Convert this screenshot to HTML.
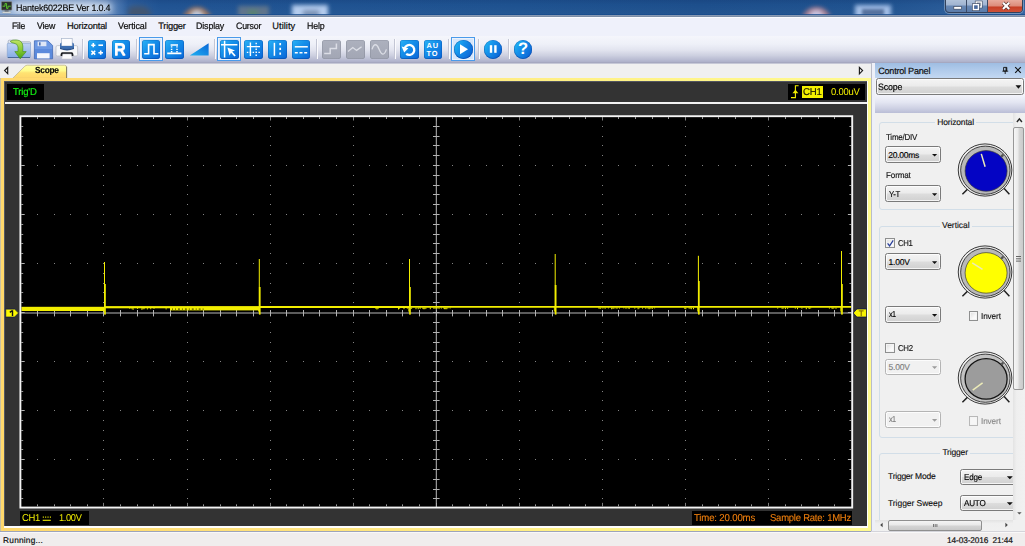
<!DOCTYPE html>
<html><head><meta charset="utf-8"><title>Hantek6022BE</title>
<style>
html,body{margin:0;padding:0;}
body{width:1025px;height:546px;overflow:hidden;position:relative;background:#f0f0f0;font-family:"Liberation Sans",sans-serif;font-size:9px;color:#000;text-rendering:geometricPrecision;}
.abs{position:absolute;}
.t{position:absolute;white-space:nowrap;line-height:1;}
#title{left:0;top:0;width:1025px;height:18px;overflow:hidden;background:#1e4f8c;}
#menu{left:0;top:18px;width:1025px;height:18px;background:#eff1fb;}
#menu .t{top:3.5px;font-size:9.3px;color:#111;-webkit-text-stroke:0.22px #111;}
#tool{left:0;top:36px;width:1025px;height:27px;background:linear-gradient(#f5f6fc 0%,#eef0f8 30%,#e2e4ef 52%,#cdd0e0 72%,#b6b9d0 90%,#a8abc5 100%);}
.ico{position:absolute;top:4px;width:18.5px;height:18.5px;border-radius:3px;background:linear-gradient(135deg,#2bb4f6 0%,#1590ea 40%,#0a66d8 100%);box-shadow:inset 0 0 0 0.6px rgba(10,80,170,.5),inset 0 -1px 1px rgba(0,50,150,.35);}
.ico.g{background:linear-gradient(#adb1be,#a2a6b4);box-shadow:inset 0 0 0 0.6px rgba(120,125,140,.5);}
.hl{position:absolute;top:1.4px;height:24px;border:1px solid #4a9aea;background:#d6e6fa;box-sizing:border-box;box-shadow:inset 0 0 0 1px rgba(255,255,255,.5);}
.sep{position:absolute;top:3px;width:1px;height:20px;background:#c3c6d4;box-shadow:1px 0 0 #fbfbfe;}
.circ{position:absolute;top:4px;width:18.5px;height:18.5px;border-radius:50%;background:linear-gradient(120deg,#22c0f6 0%,#1590ea 40%,#0a5cd2 100%);box-shadow:inset 0 0 0 0.6px rgba(10,70,160,.5),inset 0 -1px 1px rgba(0,50,150,.35);}
/* scope */
#tabrow{left:0;top:63px;width:871px;height:15px;background:#f0f0f0;border-top:1px solid #c6c8d6;box-sizing:border-box;}
/* panel */
.combo{position:absolute;box-sizing:border-box;border:1px solid #7a7a7a;border-radius:2.5px;background:linear-gradient(#f4f4f4 0%,#ebebeb 48%,#dddddd 52%,#d0d0d0 100%);box-shadow:inset 0 0 0 1px rgba(255,255,255,.75);}
.combo .t{left:4px;top:3.6px;font-size:9px;}
#pc .t{-webkit-text-stroke:0.14px currentColor;}
.combo.dis{border-color:#b4b4b4;background:#f1f1f1;}
.combo.dis .t{color:#7e7e7e;-webkit-text-stroke:0;}
.arr{position:absolute;right:4px;top:6.5px;width:0;height:0;border-left:2.7px solid transparent;border-right:2.7px solid transparent;border-top:3px solid #111;}
.combo.dis .arr{border-top-color:#9a9a9a;}
.grp{position:absolute;box-sizing:border-box;border:1px solid #d2dee8;border-radius:3px;}
.glab{position:absolute;background:#f0f0f0;padding:0 2px;font-size:9px;line-height:1;white-space:nowrap;color:#111;}
.cb{position:absolute;width:9.5px;height:9.5px;box-sizing:border-box;border:1px solid #8e8f8f;background:linear-gradient(135deg,#dcdcdc,#f8f8f8 60%,#fff);box-shadow:inset 0 0 0 1px #f4f4f4;}

#c100v{margin-top:1px}
#c2000{margin-top:1px}
#c500v{margin-top:1px}
#ch1a{margin-top:1px}
#ch1b{margin-top:1px}
#cptxt{margin-top:1px}
#cyt{margin-top:1px}
#date{margin-top:1px}
#lch1{margin-top:1px}
#lch2{margin-top:1px}
#lfmt{margin-top:1px}
#lh{margin-top:1px}
#ltd{margin-top:1px}
#ltm{margin-top:1px}
#lts{margin-top:1px}
#lv{margin-top:1px}
#run{margin-top:1px}
#srate{margin-top:1px}
#tabtxt{margin-top:-1px}
#time{margin-top:1px}
#trigd{margin-top:1px}
#uv{margin-top:1px}
#v100{margin-top:1px}
</style></head>
<body>
<div id="title" class="abs">
  <!-- aero glass backdrop -->
  <div class="abs" style="left:0;top:0;width:1025px;height:17px;background:linear-gradient(90deg,#8eabd2 0px,#93b0d6 40px,#86a5cf 90px,#5a83b8 112px,#2d5f9e 128px,#205392 160px,#1e5290 520px,#1d4f8c 700px,#1f528f 880px,#3263a0 1025px);"></div>
  <div class="abs" style="left:0;top:0;width:1025px;height:17px;background:linear-gradient(180deg,rgba(0,10,60,.10) 0,rgba(255,255,255,0) 5px,rgba(255,255,255,.04) 17px);"></div>
  <!-- blurred blobs -->
  <div class="abs" style="left:128px;top:6px;width:23px;height:14px;border-radius:5px 9px 0 0;background:#46556a;filter:blur(2.4px);opacity:.85"></div>
  <div class="abs" style="left:182px;top:6.5px;width:30px;height:18px;border-radius:15px 15px 0 0;background:#b27c58;filter:blur(2.2px);opacity:.85"></div><div class="abs" style="left:190px;top:10px;width:14px;height:10px;border-radius:7px 7px 0 0;background:#c4d4ea;filter:blur(2px);opacity:.9"></div>
  <div class="abs" style="left:238px;top:6px;width:31px;height:13px;background:#67798c;filter:blur(2.2px);opacity:.9"></div><div class="abs" style="left:248px;top:10px;width:10px;height:7px;background:#568a68;filter:blur(2px);opacity:.7"></div>
  <div class="abs" style="left:292px;top:5px;width:36px;height:14px;background:#bcd3f3;filter:blur(2px);opacity:.95"></div>
  <div class="abs" style="left:303px;top:10px;width:16px;height:8px;background:#6f86a8;filter:blur(2px);opacity:.8"></div>
  <div class="abs" style="left:802px;top:7px;width:29px;height:18px;border-radius:14px 14px 0 0;background:#b98490;filter:blur(2.2px);opacity:.85"></div><div class="abs" style="left:809px;top:10px;width:15px;height:10px;border-radius:7px 7px 0 0;background:#cfd0ee;filter:blur(2px);opacity:.85"></div>
  <div class="abs" style="left:855px;top:5px;width:36px;height:14px;background:#a9c4ec;filter:blur(2px);opacity:.95"></div>
  <div class="abs" style="left:862px;top:9px;width:22px;height:7px;background:#44608c;filter:blur(1.5px);opacity:.8"></div>
  <!-- glow behind title -->
  <div class="abs" style="left:12px;top:3px;width:100px;height:10px;border-radius:6px;background:#e9eff8;filter:blur(3.5px);opacity:.8"></div>
  <!-- app icon -->
  <svg class="abs" style="left:1px;top:1px" width="12" height="13" viewBox="0 0 12 13">
    <rect x="0.3" y="0.6" width="10.6" height="8.6" rx="0.8" fill="#2b2f2d" stroke="#9aa09c" stroke-width="0.6"/>
    <path d="M1.5 5.2 H4 V2.6 H5.6 V7.4 H7 V5.2 H9.8" fill="none" stroke="#58c42c" stroke-width="1"/>
    <rect x="3.6" y="9.6" width="4" height="1.1" fill="#444"/>
    <rect x="1.4" y="10.7" width="8.4" height="1.3" rx="0.5" fill="#e9ecec" stroke="#8d9290" stroke-width="0.4"/>
  </svg>
  <div class="t" id="ttext" style="left:16px;top:3.2px;font-size:9.4px;color:#050505;-webkit-text-stroke:0.15px #050505;letter-spacing:-0.189px;transform:scaleX(0.9531);transform-origin:0 0;">Hantek6022BE Ver 1.0.4</div>
  <!-- bottom edge -->
  <div class="abs" style="left:0;top:14px;width:1025px;height:1px;background:linear-gradient(90deg,rgba(60,100,160,.35) 0,rgba(40,85,150,.5) 110px,rgba(23,75,140,.8) 135px)"></div><div class="abs" style="left:0;top:15px;width:1025px;height:2px;background:linear-gradient(#8fa0bb,#76879f)"></div>
  <div class="abs" style="left:0;top:17px;width:1025px;height:1px;background:#fcfcff"></div>
  <!-- window controls -->
  <div class="abs" style="left:945px;top:-2px;width:78px;height:15.4px;border:1px solid #33425c;border-radius:0 0 4px 4px;box-sizing:border-box;overflow:hidden;background:linear-gradient(#b4c5dc 0,#9fb3d0 49%,#6888b4 51%,#5b7caa 100%);box-shadow:0 0 0 0.8px rgba(255,255,255,.4);">
    <div class="abs" style="left:41px;top:0;width:36px;height:15px;background:linear-gradient(#eab0a2 0,#dc8a78 49%,#c63d24 51%,#d25a40 100%);"></div>
    <div class="abs" style="left:20px;top:0;width:1px;height:15px;background:#3c4b66"></div>
    <div class="abs" style="left:40.5px;top:0;width:1px;height:15px;background:#3c4b66"></div>
    <svg class="abs" style="left:0;top:0" width="78" height="15" viewBox="945 -1 78 15">
      <!-- minimise -->
      <rect x="952.8" y="6.4" width="7.8" height="2.8" fill="#fff" stroke="#3a465e" stroke-width="0.7"/>
      <!-- restore -->
      <rect x="975.2" y="2" width="5" height="5" fill="none" stroke="#3a465e" stroke-width="2.6"/>
      <rect x="975.2" y="2" width="5" height="5" fill="none" stroke="#fff" stroke-width="1.4"/>
      <rect x="972.4" y="4.6" width="5" height="5" fill="#5a7aa8" stroke="#3a465e" stroke-width="2.6"/>
      <rect x="972.4" y="4.6" width="5" height="5" fill="#4a6a9c" stroke="#fff" stroke-width="1.4"/>
      <!-- close -->
      <path d="M1002 2.8L1008.2 9M1008.2 2.8L1002 9" stroke="#55302c" stroke-width="3.4" fill="none"/>
      <path d="M1002 2.8L1008.2 9M1008.2 2.8L1002 9" stroke="#fff" stroke-width="2.1" fill="none"/>
    </svg>
  </div>
</div>

<div id="menu" class="abs">
  <div class="t" id="m0" style="left:12px;letter-spacing:-0.241px;transform:scaleX(0.9272);transform-origin:0 0">File</div>
  <div class="t" id="m1" style="left:37px;letter-spacing:-0.236px;transform:scaleX(0.9454);transform-origin:0 0">View</div>
  <div class="t" id="m2" style="left:67px;letter-spacing:-0.186px">Horizontal</div>
  <div class="t" id="m3" style="left:118.4px;letter-spacing:-0.111px;transform:scaleX(0.9657);transform-origin:0 0">Vertical</div>
  <div class="t" id="m4" style="left:158.2px;letter-spacing:-0.230px">Trigger</div>
  <div class="t" id="m5" style="left:196.4px;letter-spacing:-0.160px;transform:scaleX(0.9570);transform-origin:0 0">Display</div>
  <div class="t" id="m6" style="left:235.8px;letter-spacing:-0.214px;transform:scaleX(0.9467);transform-origin:0 0">Cursor</div>
  <div class="t" id="m7" style="left:272.3px;letter-spacing:0.024px">Utility</div>
  <div class="t" id="m8" style="left:306.5px;letter-spacing:-0.192px;transform:scaleX(0.9533);transform-origin:0 0">Help</div>
</div>

<div id="tool" class="abs">
  <div class="abs" style="left:0;top:26px;width:1025px;height:1px;background:#a6a8c0"></div>
  <!-- open -->
  <svg class="abs" style="left:5px;top:2px" width="28" height="24" viewBox="5 38 28 24">
    <defs><linearGradient id="fo" x1="0" y1="0" x2="0" y2="1"><stop offset="0" stop-color="#c0d3f3"/><stop offset="1" stop-color="#84abe6"/></linearGradient>
    <linearGradient id="ga" x1="0" y1="0" x2="0" y2="1"><stop offset="0" stop-color="#c0e468"/><stop offset=".5" stop-color="#8ccc34"/><stop offset="1" stop-color="#44a214"/></linearGradient></defs>
    <path d="M8.2 44.4V41.2Q8.2 40.2 9.2 40.2H16.4L18 41.8H29.6Q30.6 41.8 30.6 42.8V44.4Z" fill="#e4e9f3" stroke="#9aa3b2" stroke-width="0.7"/>
    <rect x="7.3" y="43.3" width="23.2" height="14.3" rx="1" fill="url(#fo)" stroke="#8aa6d2" stroke-width="0.7"/>
    <path d="M7.8 57.5H30" stroke="#3f5f92" stroke-width="0.9"/>
    <path d="M10.2 41.4Q12 39.6 17 40Q22.4 40.6 22.8 46L22.8 51.6L26.2 51.6L20.2 58.8L14.8 51.6L18 51.6L18 47Q17.6 43.6 14 43.2Q11.6 43 10.2 41.4Z" fill="url(#ga)" stroke="#3f8a14" stroke-width="0.6"/>
  </svg>
  <!-- save -->
  <svg class="abs" style="left:33px;top:2.6px" width="21" height="21" viewBox="0 0 21 21">
    <path d="M1.4 1.8 H14.8 L19.6 6.4 V19.8 H1.4 Z" fill="#5b8adc" stroke="#4168b4" stroke-width="0.8"/>
    <path d="M1.8 2.2 H14.6 L19.2 6.6 V10 H1.8Z" fill="#79a3ea" opacity=".6"/>
    <rect x="4.6" y="2.6" width="8.8" height="4.6" fill="#dfe7f6"/>
    <rect x="6" y="3.3" width="1.6" height="3.2" fill="#5073b5"/>
    <rect x="4" y="14.2" width="12.6" height="5.2" fill="#f4f7fd"/>
  </svg>
  <!-- print -->
  <svg class="abs" style="left:55px;top:0.6px" width="24" height="24" viewBox="0 0 24 24">
    <rect x="1" y="8.6" width="21.6" height="10.4" rx="1.4" fill="#f7f8fa" stroke="#b6b9c0" stroke-width="0.7"/>
    <rect x="6.6" y="1.6" width="10.6" height="7.4" fill="#fdfdfe" stroke="#a9b6cc" stroke-width="0.7"/>
    <path d="M5 7.6 Q5 6 6.4 5.6 V9 H17.4 V5.6 Q19 6 19 7.6 V11 Q12 13.6 5 11 Z" fill="#3f6fb0"/>
    <path d="M5 10.6 Q12 13.6 19 10.6 V12 Q12 14.8 5 12 Z" fill="#2c528c"/>
    <path d="M5.6 17.4 Q5.6 15.2 7.4 15.2 H16.6 Q18.4 15.2 18.4 17.4 V19 H5.6Z" fill="#1b1d22"/>
    <path d="M6.6 22 L7.8 17 H16.2 L17.4 22 Z" fill="#fbfbfd" stroke="#b7bac2" stroke-width="0.5"/>
  </svg>
  <div class="sep" style="left:82px"></div>
  <!-- calc -->
  <div class="ico" style="left:87.8px"><svg width="18.5" height="18.5" viewBox="0 0 18.5 18.5"><g stroke="#fff" stroke-width="1.6" fill="none"><path d="M3.2 5.2H7.4M5.3 3.1V7.3"/><path d="M10.4 5.2H15"/><path d="M3.4 10.8L7.2 14.6M7.2 10.8L3.4 14.6"/><path d="M10.4 12.7H15M12.7 10.6V14.8"/></g></svg></div>
  <!-- R -->
  <div class="ico" style="left:111.7px"><div class="t" style="left:2.3px;top:0.8px;font-size:17.4px;font-weight:bold;color:#fff;text-shadow:0 .5px 0 #dde;transform:scaleX(.95);transform-origin:0 0">R</div></div>
  <div class="sep" style="left:136.4px"></div>
  <!-- pulse (selected) -->
  <div class="hl" style="left:139px;width:23.8px"></div>
  <div class="ico" style="left:141.7px"><svg width="18.5" height="18.5" viewBox="0 0 18.5 18.5"><path d="M2.2 13.8H6.6V4.6H12V13.8H16.4" stroke="#fff" stroke-width="1.6" fill="none"/></svg></div>
  <!-- pulse2 -->
  <div class="ico" style="left:165.4px"><svg width="18.5" height="18.5" viewBox="0 0 18.5 18.5"><path d="M2.2 13.4H16.4M5.6 5H13" stroke="#fff" stroke-width="1.6" fill="none"/><path d="M6.6 12.4V5.6M12 12.4V5.6" stroke="#fff" stroke-width="1.5" stroke-dasharray="1.3 1.1" fill="none"/></svg></div>
  <!-- triangle -->
  <svg class="abs" style="left:189px;top:3.2px" width="21" height="19" viewBox="0 0 21 19"><defs><linearGradient id="tg" x1="0" y1="1" x2="1" y2="0"><stop offset="0" stop-color="#1fb0f2"/><stop offset="1" stop-color="#0a66d6"/></linearGradient></defs><path d="M0.8 16.6 L19.6 4.2 V16.6 Z" fill="url(#tg)"/></svg>
  <div class="sep" style="left:214.4px"></div>
  <!-- cursor (selected) -->
  <div class="hl" style="left:217px;width:24px"></div>
  <div class="ico" style="left:220px"><svg width="18.5" height="18.5" viewBox="0 0 18.5 18.5"><path d="M4.6 0.8V17.6M1 4.8H17.4" stroke="#fff" stroke-width="1.5" fill="none"/><path d="M7.4 7.4 L15 10.6 L12.2 11.6 L15.8 15.4 L14.4 16.6 L11 12.8 L9.6 15.4 Z" fill="#fff"/></svg></div>
  <!-- hash -->
  <div class="ico" style="left:244.1px"><svg width="18.5" height="18.5" viewBox="0 0 18.5 18.5"><path d="M6.4 2.6V16M2.8 6.6H16" stroke="#fff" stroke-width="1.4" fill="none"/><path d="M12.2 2.8V16M2.8 12.4H16" stroke="#fff" stroke-width="1.4" stroke-dasharray="1.5 1.4" fill="none"/></svg></div>
  <!-- vbars -->
  <div class="ico" style="left:268px"><svg width="18.5" height="18.5" viewBox="0 0 18.5 18.5"><path d="M6.4 2.8V15.8" stroke="#fff" stroke-width="1.5" fill="none"/><path d="M12.2 3V16" stroke="#fff" stroke-width="1.7" stroke-dasharray="2.2 2.6" fill="none"/></svg></div>
  <!-- hbars -->
  <div class="ico" style="left:291.9px"><svg width="18.5" height="18.5" viewBox="0 0 18.5 18.5"><path d="M2.8 6.8H15.8" stroke="#fff" stroke-width="1.5" fill="none"/><path d="M2.8 12.8H16.4" stroke="#fff" stroke-width="1.6" stroke-dasharray="3 1.7" fill="none"/></svg></div>
  <div class="sep" style="left:316.4px"></div>
  <!-- grey icons -->
  <div class="ico g" style="left:322px"><svg width="18.5" height="18.5" viewBox="0 0 18.5 18.5"><path d="M2.2 13.6H8.2V8.6H14.4V3.6" stroke="#dcdee6" stroke-width="1.5" fill="none"/></svg></div>
  <div class="ico g" style="left:346px"><svg width="18.5" height="18.5" viewBox="0 0 18.5 18.5"><path d="M2 11.6L6.8 7.6L10.6 10.4L15.6 6.8" stroke="#dcdee6" stroke-width="1.3" fill="none"/></svg></div>
  <div class="ico g" style="left:370px"><svg width="18.5" height="18.5" viewBox="0 0 18.5 18.5"><path d="M2 9.4C4 3.2 6.6 3.2 9.2 9.4S14.4 15.6 16.4 9.4" stroke="#dcdee6" stroke-width="1.3" fill="none"/></svg></div>
  <div class="sep" style="left:394.2px"></div>
  <!-- refresh -->
  <div class="ico" style="left:400px"><svg width="18.5" height="18.5" viewBox="0 0 18.5 18.5"><path d="M6.2 13.9A5 5 0 1 0 4.6 8.2" stroke="#fff" stroke-width="2.3" fill="none"/><path d="M1.6 6.6L8.4 8.2L4.2 12.6Z" fill="#fff"/></svg></div>
  <!-- AUTO -->
  <div class="ico" style="left:423.7px"><div class="t" style="left:2.7px;top:2.2px;font-size:7.4px;font-weight:bold;color:#fff;letter-spacing:1.1px;line-height:7.4px;white-space:pre">AU
TO</div></div>
  <div class="sep" style="left:448px"></div>
  <!-- play (selected) -->
  <div class="hl" style="left:451px;width:24px"></div>
  <div class="circ" style="left:454px"><svg width="18.5" height="18.5" viewBox="0 0 18.5 18.5"><path d="M6 4.2L14 9.2L6 14.2Z" fill="#fff"/></svg></div>
  <div class="sep" style="left:478.2px"></div>
  <div class="circ" style="left:483.8px"><svg width="18.5" height="18.5" viewBox="0 0 18.5 18.5"><rect x="5.8" y="5.2" width="2.4" height="7.6" fill="#fff"/><rect x="10.2" y="5.2" width="2.4" height="7.6" fill="#fff"/></svg></div>
  <div class="sep" style="left:508px"></div>
  <div class="circ" style="left:513.8px"><div class="t" style="left:4.3px;top:0.6px;font-size:16.6px;font-weight:bold;color:#fff">?</div></div>
</div>

<!-- tab row -->
<div id="tabrow" class="abs"></div>
<div class="abs" style="left:871px;top:63px;width:4.5px;height:468px;background:#eef0f8"></div>
<div class="abs" style="left:871px;top:63px;width:0.8px;height:468px;background:#b9bcc8"></div>
<svg class="abs" style="left:0;top:63px" width="871" height="16" viewBox="0 0 871 16">
  <defs><linearGradient id="tabg" x1="0" y1="0" x2="0" y2="1"><stop offset="0" stop-color="#ffffa8"/><stop offset=".42" stop-color="#fffb8c"/><stop offset=".58" stop-color="#ffe272"/><stop offset="1" stop-color="#ffd669"/></linearGradient></defs>
  <path d="M12.6 15.4 L24.6 3.4 Q25.8 2.2 27.4 2.2 H64.4 Q66.6 2.2 66.6 4.4 V15.4 Z" fill="url(#tabg)" stroke="#b9ad86" stroke-width="0.7"/><path d="M66.6 3.6V15.4" stroke="#6e6a52" stroke-width="0.8"/>
  <path d="M7.7 4.5 L4.6 7.6 L7.7 10.7 Z" fill="none" stroke="#1a1a1a" stroke-width="1.15"/>
  <path d="M859.4 4.4 L862.6 7.6 L859.4 10.8 Z" fill="none" stroke="#1a1a1a" stroke-width="1.15"/>
</svg>
<div class="t" style="left:35.4px;top:66.6px;font-size:8.9px;font-weight:bold;color:#0a0a0a;-webkit-text-stroke:0.15px #0a0a0a;letter-spacing:-0.282px;transform:scaleX(0.9393);transform-origin:0 0" id="tabtxt">Scope</div>
<!-- yellow frame -->
<div class="abs" style="left:0;top:78px;width:871px;height:453.4px;background:linear-gradient(90deg,#ffd86c 0,#ffe27c 300px,#fff286 600px,#fffa8e 871px)"></div>
<div class="abs" style="left:0;top:78px;width:1px;height:453px;background:#c9c2a4"></div>

<!-- dark panel -->
<div class="abs" style="left:4.4px;top:81px;width:863.4px;height:447.2px;background:#fdfdfd"></div>
<div class="abs" style="left:4.4px;top:81px;width:862.6px;height:445.2px;background:#333333;box-shadow:inset 0.8px 0.8px 0 #5d6170"></div>
<!-- white separator -->
<div class="abs" style="left:5.2px;top:102px;width:861.8px;height:1.9px;background:#f2f2f2"></div>

<svg class="abs" style="left:0;top:0" width="875" height="546" viewBox="0 0 875 546">
<rect x="20.4" y="116.20" width="831.80" height="390.95" fill="#000"/>
<path d="M37 165.5h1M37 214.5h1M37 263.5h1M37 361.5h1M37 410.5h1M37 459.5h1M54 165.5h1M54 214.5h1M54 263.5h1M54 361.5h1M54 410.5h1M54 459.5h1M70 165.5h1M70 214.5h1M70 263.5h1M70 361.5h1M70 410.5h1M70 459.5h1M87 165.5h1M87 214.5h1M87 263.5h1M87 361.5h1M87 410.5h1M87 459.5h1M103 126.5h1M103 136.5h1M103 145.5h1M103 155.5h1M103 165.5h1M103 175.5h1M103 185.5h1M103 194.5h1M103 204.5h1M103 214.5h1M103 224.5h1M103 234.5h1M103 243.5h1M103 253.5h1M103 263.5h1M103 273.5h1M103 283.5h1M103 292.5h1M103 302.5h1M103 312.5h1M103 322.5h1M103 332.5h1M103 342.5h1M103 351.5h1M103 361.5h1M103 371.5h1M103 381.5h1M103 391.5h1M103 400.5h1M103 410.5h1M103 420.5h1M103 430.5h1M103 440.5h1M103 449.5h1M103 459.5h1M103 469.5h1M103 479.5h1M103 489.5h1M103 498.5h1M120 165.5h1M120 214.5h1M120 263.5h1M120 361.5h1M120 410.5h1M120 459.5h1M137 165.5h1M137 214.5h1M137 263.5h1M137 361.5h1M137 410.5h1M137 459.5h1M153 165.5h1M153 214.5h1M153 263.5h1M153 361.5h1M153 410.5h1M153 459.5h1M170 165.5h1M170 214.5h1M170 263.5h1M170 361.5h1M170 410.5h1M170 459.5h1M187 126.5h1M187 136.5h1M187 145.5h1M187 155.5h1M187 165.5h1M187 175.5h1M187 185.5h1M187 194.5h1M187 204.5h1M187 214.5h1M187 224.5h1M187 234.5h1M187 243.5h1M187 253.5h1M187 263.5h1M187 273.5h1M187 283.5h1M187 292.5h1M187 302.5h1M187 312.5h1M187 322.5h1M187 332.5h1M187 342.5h1M187 351.5h1M187 361.5h1M187 371.5h1M187 381.5h1M187 391.5h1M187 400.5h1M187 410.5h1M187 420.5h1M187 430.5h1M187 440.5h1M187 449.5h1M187 459.5h1M187 469.5h1M187 479.5h1M187 489.5h1M187 498.5h1M203 165.5h1M203 214.5h1M203 263.5h1M203 361.5h1M203 410.5h1M203 459.5h1M220 165.5h1M220 214.5h1M220 263.5h1M220 361.5h1M220 410.5h1M220 459.5h1M236 165.5h1M236 214.5h1M236 263.5h1M236 361.5h1M236 410.5h1M236 459.5h1M253 165.5h1M253 214.5h1M253 263.5h1M253 361.5h1M253 410.5h1M253 459.5h1M270 126.5h1M270 136.5h1M270 145.5h1M270 155.5h1M270 165.5h1M270 175.5h1M270 185.5h1M270 194.5h1M270 204.5h1M270 214.5h1M270 224.5h1M270 234.5h1M270 243.5h1M270 253.5h1M270 263.5h1M270 273.5h1M270 283.5h1M270 292.5h1M270 302.5h1M270 312.5h1M270 322.5h1M270 332.5h1M270 342.5h1M270 351.5h1M270 361.5h1M270 371.5h1M270 381.5h1M270 391.5h1M270 400.5h1M270 410.5h1M270 420.5h1M270 430.5h1M270 440.5h1M270 449.5h1M270 459.5h1M270 469.5h1M270 479.5h1M270 489.5h1M270 498.5h1M286 165.5h1M286 214.5h1M286 263.5h1M286 361.5h1M286 410.5h1M286 459.5h1M303 165.5h1M303 214.5h1M303 263.5h1M303 361.5h1M303 410.5h1M303 459.5h1M319 165.5h1M319 214.5h1M319 263.5h1M319 361.5h1M319 410.5h1M319 459.5h1M336 165.5h1M336 214.5h1M336 263.5h1M336 361.5h1M336 410.5h1M336 459.5h1M353 126.5h1M353 136.5h1M353 145.5h1M353 155.5h1M353 165.5h1M353 175.5h1M353 185.5h1M353 194.5h1M353 204.5h1M353 214.5h1M353 224.5h1M353 234.5h1M353 243.5h1M353 253.5h1M353 263.5h1M353 273.5h1M353 283.5h1M353 292.5h1M353 302.5h1M353 312.5h1M353 322.5h1M353 332.5h1M353 342.5h1M353 351.5h1M353 361.5h1M353 371.5h1M353 381.5h1M353 391.5h1M353 400.5h1M353 410.5h1M353 420.5h1M353 430.5h1M353 440.5h1M353 449.5h1M353 459.5h1M353 469.5h1M353 479.5h1M353 489.5h1M353 498.5h1M369 165.5h1M369 214.5h1M369 263.5h1M369 361.5h1M369 410.5h1M369 459.5h1M386 165.5h1M386 214.5h1M386 263.5h1M386 361.5h1M386 410.5h1M386 459.5h1M402 165.5h1M402 214.5h1M402 263.5h1M402 361.5h1M402 410.5h1M402 459.5h1M419 165.5h1M419 214.5h1M419 263.5h1M419 361.5h1M419 410.5h1M419 459.5h1M436 165.5h1M436 214.5h1M436 263.5h1M436 361.5h1M436 410.5h1M436 459.5h1M452 165.5h1M452 214.5h1M452 263.5h1M452 361.5h1M452 410.5h1M452 459.5h1M469 165.5h1M469 214.5h1M469 263.5h1M469 361.5h1M469 410.5h1M469 459.5h1M486 165.5h1M486 214.5h1M486 263.5h1M486 361.5h1M486 410.5h1M486 459.5h1M502 165.5h1M502 214.5h1M502 263.5h1M502 361.5h1M502 410.5h1M502 459.5h1M519 126.5h1M519 136.5h1M519 145.5h1M519 155.5h1M519 165.5h1M519 175.5h1M519 185.5h1M519 194.5h1M519 204.5h1M519 214.5h1M519 224.5h1M519 234.5h1M519 243.5h1M519 253.5h1M519 263.5h1M519 273.5h1M519 283.5h1M519 292.5h1M519 302.5h1M519 312.5h1M519 322.5h1M519 332.5h1M519 342.5h1M519 351.5h1M519 361.5h1M519 371.5h1M519 381.5h1M519 391.5h1M519 400.5h1M519 410.5h1M519 420.5h1M519 430.5h1M519 440.5h1M519 449.5h1M519 459.5h1M519 469.5h1M519 479.5h1M519 489.5h1M519 498.5h1M535 165.5h1M535 214.5h1M535 263.5h1M535 361.5h1M535 410.5h1M535 459.5h1M552 165.5h1M552 214.5h1M552 263.5h1M552 361.5h1M552 410.5h1M552 459.5h1M569 165.5h1M569 214.5h1M569 263.5h1M569 361.5h1M569 410.5h1M569 459.5h1M585 165.5h1M585 214.5h1M585 263.5h1M585 361.5h1M585 410.5h1M585 459.5h1M602 126.5h1M602 136.5h1M602 145.5h1M602 155.5h1M602 165.5h1M602 175.5h1M602 185.5h1M602 194.5h1M602 204.5h1M602 214.5h1M602 224.5h1M602 234.5h1M602 243.5h1M602 253.5h1M602 263.5h1M602 273.5h1M602 283.5h1M602 292.5h1M602 302.5h1M602 312.5h1M602 322.5h1M602 332.5h1M602 342.5h1M602 351.5h1M602 361.5h1M602 371.5h1M602 381.5h1M602 391.5h1M602 400.5h1M602 410.5h1M602 420.5h1M602 430.5h1M602 440.5h1M602 449.5h1M602 459.5h1M602 469.5h1M602 479.5h1M602 489.5h1M602 498.5h1M618 165.5h1M618 214.5h1M618 263.5h1M618 361.5h1M618 410.5h1M618 459.5h1M635 165.5h1M635 214.5h1M635 263.5h1M635 361.5h1M635 410.5h1M635 459.5h1M652 165.5h1M652 214.5h1M652 263.5h1M652 361.5h1M652 410.5h1M652 459.5h1M668 165.5h1M668 214.5h1M668 263.5h1M668 361.5h1M668 410.5h1M668 459.5h1M685 126.5h1M685 136.5h1M685 145.5h1M685 155.5h1M685 165.5h1M685 175.5h1M685 185.5h1M685 194.5h1M685 204.5h1M685 214.5h1M685 224.5h1M685 234.5h1M685 243.5h1M685 253.5h1M685 263.5h1M685 273.5h1M685 283.5h1M685 292.5h1M685 302.5h1M685 312.5h1M685 322.5h1M685 332.5h1M685 342.5h1M685 351.5h1M685 361.5h1M685 371.5h1M685 381.5h1M685 391.5h1M685 400.5h1M685 410.5h1M685 420.5h1M685 430.5h1M685 440.5h1M685 449.5h1M685 459.5h1M685 469.5h1M685 479.5h1M685 489.5h1M685 498.5h1M702 165.5h1M702 214.5h1M702 263.5h1M702 361.5h1M702 410.5h1M702 459.5h1M718 165.5h1M718 214.5h1M718 263.5h1M718 361.5h1M718 410.5h1M718 459.5h1M735 165.5h1M735 214.5h1M735 263.5h1M735 361.5h1M735 410.5h1M735 459.5h1M751 165.5h1M751 214.5h1M751 263.5h1M751 361.5h1M751 410.5h1M751 459.5h1M768 126.5h1M768 136.5h1M768 145.5h1M768 155.5h1M768 165.5h1M768 175.5h1M768 185.5h1M768 194.5h1M768 204.5h1M768 214.5h1M768 224.5h1M768 234.5h1M768 243.5h1M768 253.5h1M768 263.5h1M768 273.5h1M768 283.5h1M768 292.5h1M768 302.5h1M768 312.5h1M768 322.5h1M768 332.5h1M768 342.5h1M768 351.5h1M768 361.5h1M768 371.5h1M768 381.5h1M768 391.5h1M768 400.5h1M768 410.5h1M768 420.5h1M768 430.5h1M768 440.5h1M768 449.5h1M768 459.5h1M768 469.5h1M768 479.5h1M768 489.5h1M768 498.5h1M785 165.5h1M785 214.5h1M785 263.5h1M785 361.5h1M785 410.5h1M785 459.5h1M801 165.5h1M801 214.5h1M801 263.5h1M801 361.5h1M801 410.5h1M801 459.5h1M818 165.5h1M818 214.5h1M818 263.5h1M818 361.5h1M818 410.5h1M818 459.5h1M834 165.5h1M834 214.5h1M834 263.5h1M834 361.5h1M834 410.5h1M834 459.5h1" stroke="#848484" stroke-width="1" fill="none"/>
<path d="M21.30 126.5h1.9M851.30 126.5h-1.9M21.30 136.5h1.9M851.30 136.5h-1.9M21.30 145.5h1.9M851.30 145.5h-1.9M21.30 155.5h1.9M851.30 155.5h-1.9M21.30 175.5h1.9M851.30 175.5h-1.9M21.30 185.5h1.9M851.30 185.5h-1.9M21.30 194.5h1.9M851.30 194.5h-1.9M21.30 204.5h1.9M851.30 204.5h-1.9M21.30 224.5h1.9M851.30 224.5h-1.9M21.30 234.5h1.9M851.30 234.5h-1.9M21.30 243.5h1.9M851.30 243.5h-1.9M21.30 253.5h1.9M851.30 253.5h-1.9M21.30 273.5h1.9M851.30 273.5h-1.9M21.30 283.5h1.9M851.30 283.5h-1.9M21.30 292.5h1.9M851.30 292.5h-1.9M21.30 302.5h1.9M851.30 302.5h-1.9M21.30 322.5h1.9M851.30 322.5h-1.9M21.30 332.5h1.9M851.30 332.5h-1.9M21.30 342.5h1.9M851.30 342.5h-1.9M21.30 351.5h1.9M851.30 351.5h-1.9M21.30 371.5h1.9M851.30 371.5h-1.9M21.30 381.5h1.9M851.30 381.5h-1.9M21.30 391.5h1.9M851.30 391.5h-1.9M21.30 400.5h1.9M851.30 400.5h-1.9M21.30 420.5h1.9M851.30 420.5h-1.9M21.30 430.5h1.9M851.30 430.5h-1.9M21.30 440.5h1.9M851.30 440.5h-1.9M21.30 449.5h1.9M851.30 449.5h-1.9M21.30 469.5h1.9M851.30 469.5h-1.9M21.30 479.5h1.9M851.30 479.5h-1.9M21.30 489.5h1.9M851.30 489.5h-1.9M21.30 498.5h1.9M851.30 498.5h-1.9" stroke="#9a9a9a" stroke-width="1" fill="none"/>
<path d="M21.30 165.5h3.4M851.30 165.5h-3.4M21.30 214.5h3.4M851.30 214.5h-3.4M21.30 263.5h3.4M851.30 263.5h-3.4M21.30 312.5h3.4M851.30 312.5h-3.4M21.30 361.5h3.4M851.30 361.5h-3.4M21.30 410.5h3.4M851.30 410.5h-3.4M21.30 459.5h3.4M851.30 459.5h-3.4" stroke="#b4b4b4" stroke-width="1" fill="none"/>
<path d="M37.5 117.10v1.9M37.5 506.25v-1.9M54.5 117.10v1.9M54.5 506.25v-1.9M70.5 117.10v1.9M70.5 506.25v-1.9M87.5 117.10v1.9M87.5 506.25v-1.9M120.5 117.10v1.9M120.5 506.25v-1.9M137.5 117.10v1.9M137.5 506.25v-1.9M153.5 117.10v1.9M153.5 506.25v-1.9M170.5 117.10v1.9M170.5 506.25v-1.9M203.5 117.10v1.9M203.5 506.25v-1.9M220.5 117.10v1.9M220.5 506.25v-1.9M236.5 117.10v1.9M236.5 506.25v-1.9M253.5 117.10v1.9M253.5 506.25v-1.9M286.5 117.10v1.9M286.5 506.25v-1.9M303.5 117.10v1.9M303.5 506.25v-1.9M319.5 117.10v1.9M319.5 506.25v-1.9M336.5 117.10v1.9M336.5 506.25v-1.9M369.5 117.10v1.9M369.5 506.25v-1.9M386.5 117.10v1.9M386.5 506.25v-1.9M402.5 117.10v1.9M402.5 506.25v-1.9M419.5 117.10v1.9M419.5 506.25v-1.9M452.5 117.10v1.9M452.5 506.25v-1.9M469.5 117.10v1.9M469.5 506.25v-1.9M486.5 117.10v1.9M486.5 506.25v-1.9M502.5 117.10v1.9M502.5 506.25v-1.9M535.5 117.10v1.9M535.5 506.25v-1.9M552.5 117.10v1.9M552.5 506.25v-1.9M569.5 117.10v1.9M569.5 506.25v-1.9M585.5 117.10v1.9M585.5 506.25v-1.9M618.5 117.10v1.9M618.5 506.25v-1.9M635.5 117.10v1.9M635.5 506.25v-1.9M652.5 117.10v1.9M652.5 506.25v-1.9M668.5 117.10v1.9M668.5 506.25v-1.9M702.5 117.10v1.9M702.5 506.25v-1.9M718.5 117.10v1.9M718.5 506.25v-1.9M735.5 117.10v1.9M735.5 506.25v-1.9M751.5 117.10v1.9M751.5 506.25v-1.9M785.5 117.10v1.9M785.5 506.25v-1.9M801.5 117.10v1.9M801.5 506.25v-1.9M818.5 117.10v1.9M818.5 506.25v-1.9M834.5 117.10v1.9M834.5 506.25v-1.9" stroke="#9a9a9a" stroke-width="1" fill="none"/>
<path d="M103.5 117.10v3.4M103.5 506.25v-3.4M187.5 117.10v3.4M187.5 506.25v-3.4M270.5 117.10v3.4M270.5 506.25v-3.4M353.5 117.10v3.4M353.5 506.25v-3.4M436.5 117.10v3.4M436.5 506.25v-3.4M519.5 117.10v3.4M519.5 506.25v-3.4M602.5 117.10v3.4M602.5 506.25v-3.4M685.5 117.10v3.4M685.5 506.25v-3.4M768.5 117.10v3.4M768.5 506.25v-3.4" stroke="#7c7c7c" stroke-width="1" fill="none"/>
<rect x="20.4" y="312.50" width="831.80" height="1" fill="#b8b8b8"/>
<rect x="435.80" y="116.20" width="1" height="390.95" fill="#b8b8b8"/>
<path d="M37.5 310.00v6.4M54.5 310.00v6.4M70.5 310.00v6.4M87.5 310.00v6.4M103.5 310.00v6.4M120.5 310.00v6.4M137.5 310.00v6.4M153.5 310.00v6.4M170.5 310.00v6.4M187.5 310.00v6.4M203.5 310.00v6.4M220.5 310.00v6.4M236.5 310.00v6.4M253.5 310.00v6.4M270.5 310.00v6.4M286.5 310.00v6.4M303.5 310.00v6.4M319.5 310.00v6.4M336.5 310.00v6.4M353.5 310.00v6.4M369.5 310.00v6.4M386.5 310.00v6.4M402.5 310.00v6.4M419.5 310.00v6.4M436.5 310.00v6.4M452.5 310.00v6.4M469.5 310.00v6.4M486.5 310.00v6.4M502.5 310.00v6.4M519.5 310.00v6.4M535.5 310.00v6.4M552.5 310.00v6.4M569.5 310.00v6.4M585.5 310.00v6.4M602.5 310.00v6.4M618.5 310.00v6.4M635.5 310.00v6.4M652.5 310.00v6.4M668.5 310.00v6.4M685.5 310.00v6.4M702.5 310.00v6.4M718.5 310.00v6.4M735.5 310.00v6.4M751.5 310.00v6.4M768.5 310.00v6.4M785.5 310.00v6.4M801.5 310.00v6.4M818.5 310.00v6.4M834.5 310.00v6.4M433.00 126.5h6.6M433.00 136.5h6.6M433.00 145.5h6.6M433.00 155.5h6.6M433.00 165.5h6.6M433.00 175.5h6.6M433.00 185.5h6.6M433.00 194.5h6.6M433.00 204.5h6.6M433.00 214.5h6.6M433.00 224.5h6.6M433.00 234.5h6.6M433.00 243.5h6.6M433.00 253.5h6.6M433.00 263.5h6.6M433.00 273.5h6.6M433.00 283.5h6.6M433.00 292.5h6.6M433.00 302.5h6.6M433.00 312.5h6.6M433.00 322.5h6.6M433.00 332.5h6.6M433.00 342.5h6.6M433.00 351.5h6.6M433.00 361.5h6.6M433.00 371.5h6.6M433.00 381.5h6.6M433.00 391.5h6.6M433.00 400.5h6.6M433.00 410.5h6.6M433.00 420.5h6.6M433.00 430.5h6.6M433.00 440.5h6.6M433.00 449.5h6.6M433.00 459.5h6.6M433.00 469.5h6.6M433.00 479.5h6.6M433.00 489.5h6.6M433.00 498.5h6.6" stroke="#b2b2b2" stroke-width="1" fill="none"/>
<rect x="21.4" y="306.8" width="83.10" height="4.2" fill="#f2ee00"/>
<rect x="104.5" y="306.1" width="65.50" height="2.2" fill="#f2ee00"/>
<rect x="170" y="306.1" width="89.30" height="4.3" fill="#f2ee00"/>
<rect x="259.3" y="306.0" width="150.20" height="2.0" fill="#f2ee00"/>
<rect x="409.5" y="306.0" width="441.70" height="1.75" fill="#f2ee00"/>
<rect x="172.0" y="308.6" width="1" height="1" fill="#333000"/>
<rect x="175.0" y="308.6" width="1" height="1" fill="#333000"/>
<rect x="178.0" y="308.6" width="1" height="1" fill="#333000"/>
<rect x="178.9" y="308.6" width="1" height="1" fill="#333000"/>
<rect x="181.9" y="308.6" width="1" height="1" fill="#333000"/>
<rect x="184.9" y="308.6" width="1" height="1" fill="#333000"/>
<rect x="185.8" y="308.6" width="1" height="1" fill="#333000"/>
<rect x="188.8" y="308.6" width="1" height="1" fill="#333000"/>
<rect x="191.8" y="308.6" width="1" height="1" fill="#333000"/>
<rect x="192.7" y="308.6" width="1" height="1" fill="#333000"/>
<rect x="195.7" y="308.6" width="1" height="1" fill="#333000"/>
<rect x="198.7" y="308.6" width="1" height="1" fill="#333000"/>
<rect x="199.6" y="308.6" width="1" height="1" fill="#333000"/>
<rect x="202.6" y="308.6" width="1" height="1" fill="#333000"/>
<rect x="104.00" y="262" width="1" height="45.20" fill="#f2ee00"/>
<rect x="104.10" y="284" width="1.7" height="30.600000000000023" fill="#f2ee00"/>
<rect x="103.20" y="307" width="1.2" height="4.6" fill="#f2ee00" opacity=".8"/>
<rect x="258.80" y="259" width="1" height="48.20" fill="#f2ee00"/>
<rect x="258.90" y="287" width="1.7" height="27.600000000000023" fill="#f2ee00"/>
<rect x="258.00" y="307" width="1.2" height="4.6" fill="#f2ee00" opacity=".8"/>
<rect x="409.00" y="259" width="1" height="48.20" fill="#f2ee00"/>
<rect x="409.10" y="287" width="1.7" height="27.600000000000023" fill="#f2ee00"/>
<rect x="408.20" y="307" width="1.2" height="4.6" fill="#f2ee00" opacity=".8"/>
<rect x="554.70" y="254" width="1" height="53.20" fill="#f2ee00"/>
<rect x="554.80" y="285" width="1.7" height="29.600000000000023" fill="#f2ee00"/>
<rect x="553.90" y="307" width="1.2" height="4.6" fill="#f2ee00" opacity=".8"/>
<rect x="697.90" y="255.8" width="1" height="51.40" fill="#f2ee00"/>
<rect x="698.00" y="281" width="1.7" height="33.60000000000002" fill="#f2ee00"/>
<rect x="697.10" y="307" width="1.2" height="4.6" fill="#f2ee00" opacity=".8"/>
<rect x="841.00" y="251" width="1" height="56.20" fill="#f2ee00"/>
<rect x="841.10" y="284" width="1.7" height="30.600000000000023" fill="#f2ee00"/>
<rect x="840.20" y="307" width="1.2" height="4.6" fill="#f2ee00" opacity=".8"/>
<rect x="129.3" y="308.2" width="1" height="0.8" fill="#f2ee00"/>
<rect x="131.5" y="308.2" width="1" height="1.0" fill="#f2ee00"/>
<rect x="132.6" y="308.2" width="1" height="1.6" fill="#f2ee00"/>
<rect x="137.0" y="308.2" width="1" height="0.8" fill="#f2ee00"/>
<rect x="141.4" y="308.2" width="1" height="1.6" fill="#f2ee00"/>
<rect x="142.5" y="308.2" width="1" height="1.0" fill="#f2ee00"/>
<rect x="143.6" y="308.2" width="1" height="1.0" fill="#f2ee00"/>
<rect x="146.9" y="308.2" width="1" height="1.2" fill="#f2ee00"/>
<rect x="150.2" y="308.2" width="1" height="1.0" fill="#f2ee00"/>
<rect x="153.5" y="308.2" width="1" height="0.8" fill="#f2ee00"/>
<rect x="165.6" y="308.2" width="1" height="1.2" fill="#f2ee00"/>
<rect x="375.3" y="307.9" width="1" height="0.8" fill="#f2ee00"/>
<rect x="376.4" y="307.9" width="1" height="1.6" fill="#f2ee00"/>
<rect x="377.5" y="307.9" width="1" height="1.2" fill="#f2ee00"/>
<rect x="398.0" y="307.9" width="1" height="1.6" fill="#f2ee00"/>
<rect x="399.1" y="307.9" width="1" height="0.8" fill="#f2ee00"/>
<rect x="403.5" y="307.9" width="1" height="1.2" fill="#f2ee00"/>
<rect x="406.8" y="307.9" width="1" height="0.8" fill="#f2ee00"/>
<rect x="410.0" y="307.6" width="1" height="0.8" fill="#f2ee00"/>
<rect x="411.1" y="307.6" width="1" height="1.2" fill="#f2ee00"/>
<rect x="415.5" y="307.6" width="1" height="1.6" fill="#f2ee00"/>
<rect x="417.7" y="307.6" width="1" height="1.6" fill="#f2ee00"/>
<rect x="418.8" y="307.6" width="1" height="0.8" fill="#f2ee00"/>
<rect x="419.9" y="307.6" width="1" height="1.0" fill="#f2ee00"/>
<rect x="422.1" y="307.6" width="1" height="1.0" fill="#f2ee00"/>
<rect x="423.2" y="307.6" width="1" height="1.6" fill="#f2ee00"/>
<rect x="424.3" y="307.6" width="1" height="1.6" fill="#f2ee00"/>
<rect x="425.4" y="307.6" width="1" height="1.2" fill="#f2ee00"/>
<rect x="429.8" y="307.6" width="1" height="1.6" fill="#f2ee00"/>
<rect x="433.1" y="307.6" width="1" height="1.0" fill="#f2ee00"/>
<rect x="434.2" y="307.6" width="1" height="1.0" fill="#f2ee00"/>
<rect x="435.3" y="307.6" width="1" height="1.0" fill="#f2ee00"/>
<rect x="436.4" y="307.6" width="1" height="1.0" fill="#f2ee00"/>
<rect x="437.5" y="307.6" width="1" height="0.8" fill="#f2ee00"/>
<rect x="438.6" y="307.6" width="1" height="1.2" fill="#f2ee00"/>
<rect x="440.8" y="307.6" width="1" height="1.0" fill="#f2ee00"/>
<rect x="443.0" y="307.6" width="1" height="0.8" fill="#f2ee00"/>
<rect x="444.1" y="307.6" width="1" height="1.6" fill="#f2ee00"/>
<rect x="445.2" y="307.6" width="1" height="1.6" fill="#f2ee00"/>
<rect x="446.3" y="307.6" width="1" height="1.6" fill="#f2ee00"/>
<rect x="447.4" y="307.6" width="1" height="0.8" fill="#f2ee00"/>
<rect x="449.6" y="307.6" width="1" height="0.8" fill="#f2ee00"/>
<rect x="598.0" y="307.6" width="1" height="0.8" fill="#f2ee00"/>
<rect x="599.1" y="307.6" width="1" height="1.0" fill="#f2ee00"/>
<rect x="600.2" y="307.6" width="1" height="1.2" fill="#f2ee00"/>
<rect x="602.4" y="307.6" width="1" height="1.0" fill="#f2ee00"/>
<rect x="604.6" y="307.6" width="1" height="1.2" fill="#f2ee00"/>
<rect x="607.9" y="307.6" width="1" height="0.8" fill="#f2ee00"/>
<rect x="611.2" y="307.6" width="1" height="1.6" fill="#f2ee00"/>
<rect x="612.3" y="307.6" width="1" height="1.0" fill="#f2ee00"/>
<rect x="613.4" y="307.6" width="1" height="1.2" fill="#f2ee00"/>
<rect x="615.6" y="307.6" width="1" height="1.0" fill="#f2ee00"/>
<rect x="616.7" y="307.6" width="1" height="1.0" fill="#f2ee00"/>
<rect x="618.9" y="307.6" width="1" height="1.0" fill="#f2ee00"/>
<rect x="623.3" y="307.6" width="1" height="0.8" fill="#f2ee00"/>
<rect x="625.5" y="307.6" width="1" height="1.2" fill="#f2ee00"/>
<rect x="627.7" y="307.6" width="1" height="1.0" fill="#f2ee00"/>
<rect x="628.8" y="307.6" width="1" height="1.2" fill="#f2ee00"/>
<rect x="634.3" y="307.6" width="1" height="1.0" fill="#f2ee00"/>
<rect x="637.6" y="307.6" width="1" height="1.6" fill="#f2ee00"/>
<rect x="638.7" y="307.6" width="1" height="0.8" fill="#f2ee00"/>
<rect x="642.0" y="307.6" width="1" height="1.0" fill="#f2ee00"/>
<rect x="645.3" y="307.6" width="1" height="1.2" fill="#f2ee00"/>
<rect x="647.5" y="307.6" width="1" height="1.0" fill="#f2ee00"/>
<rect x="648.6" y="307.6" width="1" height="1.6" fill="#f2ee00"/>
<rect x="649.7" y="307.6" width="1" height="1.0" fill="#f2ee00"/>
<rect x="650.8" y="307.6" width="1" height="0.8" fill="#f2ee00"/>
<rect x="651.9" y="307.6" width="1" height="1.2" fill="#f2ee00"/>
<rect x="654.1" y="307.6" width="1" height="0.8" fill="#f2ee00"/>
<rect x="684.2" y="307.6" width="1" height="1.2" fill="#f2ee00"/>
<rect x="685.3" y="307.6" width="1" height="1.6" fill="#f2ee00"/>
<rect x="688.6" y="307.6" width="1" height="1.0" fill="#f2ee00"/>
<rect x="689.7" y="307.6" width="1" height="1.0" fill="#f2ee00"/>
<rect x="690.8" y="307.6" width="1" height="1.6" fill="#f2ee00"/>
<rect x="693.0" y="307.6" width="1" height="1.6" fill="#f2ee00"/>
<rect x="697.4" y="307.6" width="1" height="0.8" fill="#f2ee00"/>
<rect x="777.2" y="307.6" width="1" height="1.0" fill="#f2ee00"/>
<rect x="781.6" y="307.6" width="1" height="1.2" fill="#f2ee00"/>
<rect x="782.7" y="307.6" width="1" height="1.0" fill="#f2ee00"/>
<rect x="784.9" y="307.6" width="1" height="1.6" fill="#f2ee00"/>
<rect x="787.1" y="307.6" width="1" height="1.2" fill="#f2ee00"/>
<rect x="794.8" y="307.6" width="1" height="1.0" fill="#f2ee00"/>
<rect x="797.0" y="307.6" width="1" height="1.6" fill="#f2ee00"/>
<rect x="801.4" y="307.6" width="1" height="1.0" fill="#f2ee00"/>
<rect x="805.8" y="307.6" width="1" height="1.6" fill="#f2ee00"/>
<rect x="808.0" y="307.6" width="1" height="0.8" fill="#f2ee00"/>
<rect x="809.1" y="307.6" width="1" height="1.2" fill="#f2ee00"/>
<rect x="810.2" y="307.6" width="1" height="0.8" fill="#f2ee00"/>
<rect x="828.9" y="307.6" width="1" height="1.0" fill="#f2ee00"/>
<rect x="831.1" y="307.6" width="1" height="0.8" fill="#f2ee00"/>
<rect x="832.2" y="307.6" width="1" height="1.2" fill="#f2ee00"/>
<rect x="833.3" y="307.6" width="1" height="1.0" fill="#f2ee00"/>
<rect x="835.5" y="307.6" width="1" height="1.2" fill="#f2ee00"/>
<rect x="20.4" y="116.20" width="831.80" height="391.35" fill="none" stroke="#f4f4f4" stroke-width="1.9"/>
</svg>
<!-- Trig'D -->
<div class="abs" style="left:7px;top:84.2px;width:37.2px;height:15.8px;background:#000"></div>
<div class="t" id="trigd" style="left:12.8px;top:86.8px;font-size:10px;color:#14f414;-webkit-text-stroke:0.2px #14f414;letter-spacing:-0.180px;transform:scaleX(0.9516);transform-origin:0 0">Trig'D</div>
<!-- trigger info -->
<div class="abs" style="left:788px;top:84.2px;width:76.8px;height:15.8px;background:#000"></div>
<svg class="abs" style="left:790px;top:84px" width="12" height="16" viewBox="0 0 12 16"><path d="M1 13.6H5.4V1.8H8.6" fill="none" stroke="#f2ee00" stroke-width="1.1"/><path d="M2.4 9.2L5.4 5.8L8.4 9.2Z" fill="#f2ee00"/></svg>
<div class="abs" style="left:802px;top:86.2px;width:20.6px;height:11.4px;background:#f4f000"></div>
<div class="t" id="ch1a" style="left:803px;top:87.1px;font-size:10px;color:#1c1a00;-webkit-text-stroke:0.2px #1c1a00;letter-spacing:-0.205px;transform:scaleX(0.9638);transform-origin:0 0">CH1</div>
<div class="t" id="uv" style="left:831px;top:87.1px;font-size:10px;color:#f2ee00;letter-spacing:-0.254px;transform:scaleX(0.9444);transform-origin:0 0">0.00uV</div>
<!-- bottom CH1 -->
<div class="abs" style="left:20px;top:511px;width:69px;height:14px;background:#000"></div>
<div class="t" id="ch1b" style="left:21.7px;top:513.2px;font-size:10px;color:#f2ee00;letter-spacing:-0.303px;transform:scaleX(0.9474);transform-origin:0 0">CH1</div>
<svg class="abs" style="left:42px;top:514px" width="11" height="8" viewBox="0 0 11 8"><path d="M0.8 3.2H9" stroke="#f2ee00" stroke-width="1.3" stroke-dasharray="1.05 1.3"/><path d="M0.7 6.3H8.8" stroke="#f2ee00" stroke-width="1.1"/></svg>
<div class="t" id="v100" style="left:58.5px;top:513.2px;font-size:10px;color:#f2ee00;letter-spacing:-0.355px;transform:scaleX(0.9234);transform-origin:0 0">1.00V</div>
<!-- time / sample -->
<div class="abs" style="left:692px;top:510.6px;width:160px;height:14.4px;background:#000"></div>
<div class="t" id="time" style="left:694px;top:513.1px;font-size:10px;color:#ee7e0c;-webkit-text-stroke:0.12px #ee7e0c;letter-spacing:-0.168px;transform:scaleX(0.9610);transform-origin:0 0">Time: 20.00ms</div>
<div class="t" id="srate" style="left:769.6px;top:513.1px;font-size:10px;color:#ee7e0c;-webkit-text-stroke:0.12px #ee7e0c;letter-spacing:-0.237px;transform:scaleX(0.9479);transform-origin:0 0">Sample Rate: 1MHz</div>
<!-- channel marker -->
<svg class="abs" style="left:4px;top:307px" width="17" height="12" viewBox="0 0 17 12"><path d="M1.7 2.1H10.6L14.6 6L10.6 10.1H1.7Z" fill="#fbf800" stroke="#141a4a" stroke-width="0.8"/><path d="M5.8 5.4L7.8 3.9H8.5V9.1" fill="none" stroke="#111" stroke-width="1.4"/></svg>
<!-- trigger marker -->
<svg class="abs" style="left:851.2px;top:307px" width="16" height="12" viewBox="0 0 16 12"><path d="M15.7 1.9H5.9L2.2 6L5.9 10.1H15.7Z" fill="#f8f400" stroke="#141a4a" stroke-width="0.9"/><path d="M7.8 3.9H12.6M10.2 3.9V9.2" fill="none" stroke="#7a6200" stroke-width="1"/></svg>

<!-- control panel header -->
<div class="abs" style="left:875.4px;top:63px;width:149.6px;height:14.8px;background:linear-gradient(#9fbde2 0,#aac6e8 30%,#c3d8f2 100%)"></div>
<div class="t" id="cptxt" style="left:878.2px;top:66.2px;font-size:9.1px;color:#111;-webkit-text-stroke:0.2px #111;letter-spacing:-0.239px">Control Panel</div>
<svg class="abs" style="left:1001px;top:66px" width="9" height="9" viewBox="0 0 9 9"><path d="M2.6 1.4H5.8V5H2.6Z" fill="none" stroke="#111" stroke-width="0.9"/><path d="M5.2 1.4V5" stroke="#111" stroke-width="1.2"/><path d="M1.4 5.2H7.2M4.2 5.2V8" stroke="#111" stroke-width="0.9"/></svg>
<svg class="abs" style="left:1013.5px;top:66px" width="8" height="8" viewBox="0 0 8 8"><path d="M1.2 1.2L6.8 6.8M6.8 1.2L1.2 6.8" stroke="#111" stroke-width="1.2"/></svg>
<!-- combo Scope -->
<div class="abs" style="left:875.4px;top:77.8px;width:149.6px;height:17.4px;background:#f3f4fa"></div>
<div class="combo" style="left:875.6px;top:78.4px;width:148.8px;height:16.2px"><div class="t" id="cscope" style="left:1.6px;top:3.2px;font-size:9.2px;-webkit-text-stroke:0.2px #111;letter-spacing:-0.174px;transform:scaleX(0.9607);transform-origin:0 0">Scope</div></div>
<svg class="abs" style="left:1010px;top:80px" width="15" height="12" viewBox="1010 80 15 12"><path d="M1015.5 85.2H1021.3L1018.4 88.8Z" fill="#111"/></svg>
<div class="abs" style="left:875.4px;top:95px;width:149.6px;height:18px;background:linear-gradient(#f3f4fb 0,#e4e6f2 40%,#cdd0e3 75%,#b9bdd6 100%)"></div>
<!-- content -->
<div class="abs" id="pc" style="left:875.4px;top:113px;width:137.8px;height:406.5px;background:#f0f0f0;overflow:hidden">
 <div class="abs" style="left:-875.4px;top:-113px;width:1025px;height:546px">
<div class="grp" style="left:878.7px;top:122.4px;width:150px;height:88px"></div>
<div class="abs" style="left:935.3px;top:117.8px;width:40.6px;height:8px;background:#f0f0f0"></div><div class="t" id="lh" style="left:937.3px;top:117.2px;font-size:8.5px;color:#111;letter-spacing:-0.168px">Horizontal</div>
<div class="t" id="ltd" style="left:886.4px;top:132.2px;font-size:8.5px;color:#111;letter-spacing:-0.241px;transform:scaleX(0.9372);transform-origin:0 0">Time/DIV</div>
<div class="combo" style="left:885px;top:146.2px;width:56px;height:16.4px"><div class="t" id="c2000" style="left:2.2px;top:3.0px;font-size:8.5px;letter-spacing:-0.258px">20.00ms</div></div>
<div class="t" id="lfmt" style="left:886.4px;top:170.3px;font-size:8.5px;color:#111;letter-spacing:-0.175px;transform:scaleX(0.9546);transform-origin:0 0">Format</div>
<div class="combo" style="left:885px;top:185.4px;width:56px;height:16.4px"><div class="t" id="cyt" style="left:2.7px;top:3.0px;font-size:8.5px;letter-spacing:-0.314px;transform:scaleX(0.9182);transform-origin:0 0">Y-T</div></div>
<svg class="abs" style="left:954.2px;top:139.3px" width="62" height="62" viewBox="954.2 139.3 62 62"><path d="M962.6 194.5L969.6 187.7M1009.6 194.5L1003.9 188.3" stroke="#222" stroke-width="1.5"/><ellipse cx="985.25" cy="170.3" rx="26.8" ry="26.1" fill="#ececec" stroke="#242424" stroke-width="0.9"/><ellipse cx="985.55" cy="170.5" rx="24.7" ry="24.1" fill="#b9b9b9" stroke="#2c2c2c" stroke-width="0.9"/><ellipse cx="986.30" cy="171.20" rx="21" ry="20.3" fill="#0404c4" stroke="#3a3a3a" stroke-width="0.7"/><ellipse cx="1002.5" cy="155.9" rx="1.3" ry="1.8" transform="rotate(45 1002.5 155.9)" fill="#555"/><path d="M981.5 154.2L985.3 167" stroke="#ecebb8" stroke-width="1.5"/></svg>
<div class="grp" style="left:878.7px;top:226.2px;width:150px;height:211.4px"></div>
<div class="abs" style="left:940.0px;top:220.4px;width:31.6px;height:8px;background:#f0f0f0"></div><div class="t" id="lv" style="left:942px;top:219.8px;font-size:8.5px;color:#111;letter-spacing:-0.034px">Vertical</div>
<div class="cb" style="left:885.3px;top:238px"></div>
<svg class="abs" style="left:886px;top:238.6px" width="9" height="9" viewBox="0 0 9 9"><path d="M1.6 4.4L3.6 6.8L7.2 1.4" fill="none" stroke="#2a3f9a" stroke-width="1.3"/></svg>
<div class="t" id="lch1" style="left:897.7px;top:238.2px;font-size:8.5px;color:#111;letter-spacing:-0.447px;transform:scaleX(0.9122);transform-origin:0 0">CH1</div>
<div class="combo" style="left:885.3px;top:253.1px;width:55.4px;height:16.5px"><div class="t" id="c100v" style="left:2.3px;top:3.1px;font-size:8.5px;letter-spacing:-0.224px">1.00V</div></div>
<div class="combo" style="left:885.3px;top:306.4px;width:55.4px;height:16.2px"><div class="t" id="cx1a" style="left:2.3px;top:2.9px;font-size:8.5px;letter-spacing:-0.628px;transform:scaleX(0.8540);transform-origin:0 0">x1</div></div>
<div class="cb" style="left:968.5px;top:311.4px"></div>
<div class="t" id="linv1" style="left:981px;top:311.8px;font-size:8.5px;color:#111;letter-spacing:-0.114px;transform:scaleX(0.9621);transform-origin:0 0">Invert</div>
<svg class="abs" style="left:954.2px;top:240.6px" width="62" height="62" viewBox="954.2 240.6 62 62"><path d="M962.6 295.8L969.6 289.0M1009.6 295.8L1003.9 289.6" stroke="#222" stroke-width="1.5"/><ellipse cx="985.25" cy="271.6" rx="26.8" ry="26.1" fill="#ececec" stroke="#242424" stroke-width="0.9"/><ellipse cx="985.55" cy="271.8" rx="24.7" ry="24.1" fill="#b9b9b9" stroke="#2c2c2c" stroke-width="0.9"/><ellipse cx="986.30" cy="272.50" rx="21" ry="20.3" fill="#ffff00" stroke="#3a3a3a" stroke-width="0.7"/><ellipse cx="1002.5" cy="257.2" rx="1.3" ry="1.8" transform="rotate(45 1002.5 257.2)" fill="#555"/><path d="M972.4 262.4L982.7 269" stroke="#ecebb8" stroke-width="1.5"/></svg>
<div class="cb" style="left:885.3px;top:343px"></div>
<div class="t" id="lch2" style="left:897.7px;top:343.2px;font-size:8.5px;color:#111;letter-spacing:-0.375px;transform:scaleX(0.9252);transform-origin:0 0">CH2</div>
<div class="combo dis" style="left:885.3px;top:358.6px;width:55.4px;height:16.2px"><div class="t" id="c500v" style="left:2.3px;top:2.9px;font-size:8.5px;letter-spacing:-0.224px">5.00V</div></div>
<div class="combo dis" style="left:885.3px;top:411.4px;width:55.4px;height:16.2px"><div class="t" id="cx1b" style="left:2.3px;top:2.9px;font-size:8.5px;letter-spacing:-0.628px;transform:scaleX(0.8540);transform-origin:0 0">x1</div></div>
<div class="cb" style="left:968.5px;top:416.4px;border-color:#b8b8b8;background:#f6f6f6"></div>
<div class="t" id="linv2" style="left:981px;top:416.8px;font-size:8.5px;color:#8a8a8a;letter-spacing:-0.114px;transform:scaleX(0.9621);transform-origin:0 0">Invert</div>
<svg class="abs" style="left:954.2px;top:346.6px" width="62" height="62" viewBox="954.2 346.6 62 62"><path d="M962.6 401.8L969.6 395.0M1009.6 401.8L1003.9 395.6" stroke="#222" stroke-width="1.5"/><ellipse cx="985.25" cy="377.6" rx="26.8" ry="26.1" fill="#ececec" stroke="#242424" stroke-width="0.9"/><ellipse cx="985.55" cy="377.8" rx="24.7" ry="24.1" fill="#c2c2c2" stroke="#2c2c2c" stroke-width="0.9"/><ellipse cx="986.30" cy="378.50" rx="21" ry="20.3" fill="#9c9c9c" stroke="#141414" stroke-width="1.3"/><ellipse cx="1002.5" cy="363.2" rx="1.3" ry="1.8" transform="rotate(45 1002.5 363.2)" fill="#555"/><path d="M972.9 389.7L982.8 382.5" stroke="#ecebb8" stroke-width="1.5"/></svg>
<div class="grp" style="left:878.7px;top:453.4px;width:150px;height:100px"></div>
<div class="abs" style="left:940.4px;top:448.3px;width:29.4px;height:8px;background:#f0f0f0"></div><div class="t" id="lt" style="left:942.4px;top:447.8px;font-size:8.5px;color:#111;letter-spacing:-0.173px">Trigger</div>
<div class="t" id="ltm" style="left:888px;top:471.4px;font-size:8.5px;color:#111;letter-spacing:-0.236px">Trigger Mode</div>
<div class="combo" style="left:960px;top:469px;width:60px;height:16.2px"><div class="t" id="cedge" style="left:2.6px;top:2.9px;font-size:8.5px;letter-spacing:-0.221px;transform:scaleX(0.9485);transform-origin:0 0">Edge</div></div>
<div class="t" id="lts" style="left:888px;top:498.1px;font-size:8.5px;color:#111;letter-spacing:-0.044px">Trigger Sweep</div>
<div class="combo" style="left:960px;top:495.3px;width:60px;height:15.9px"><div class="t" id="cauto" style="left:2.6px;top:2.8px;font-size:8.5px;letter-spacing:-0.232px;transform:scaleX(0.9539);transform-origin:0 0">AUTO</div></div>
<svg class="abs" style="left:875px;top:113px" width="138" height="406" viewBox="875 113 138 406"><path d="M932 153.9H937.2L934.60 156.6Z" fill="#111"/><path d="M932 193.2H937.2L934.60 195.9Z" fill="#111"/><path d="M932 261.2H937.2L934.60 263.9Z" fill="#111"/><path d="M932 314H937.2L934.60 316.7Z" fill="#111"/><path d="M932 366.2H937.2L934.60 368.9Z" fill="#9c9c9c"/><path d="M932 419H937.2L934.60 421.7Z" fill="#9c9c9c"/><path d="M1006.8 476.3H1012.8L1009.80 479.3Z" fill="#111"/><path d="M1006.8 502.3H1012.8L1009.80 505.3Z" fill="#111"/></svg>
 </div>
</div>
<!-- vertical scrollbar -->
<div class="abs" style="left:1012.6px;top:113px;width:12.4px;height:406.5px;background:linear-gradient(90deg,#e3e3e3,#efefef 30%,#f1f1f1)"></div>
<svg class="abs" style="left:1015px;top:116.5px" width="9" height="7" viewBox="0 0 9 7"><path d="M1.9 5L4.4 1.9L6.9 5" fill="none" stroke="#2a2a2a" stroke-width="1.5"/></svg>
<svg class="abs" style="left:1014.6px;top:509.6px" width="9" height="7" viewBox="0 0 9 7"><path d="M2.2 2.2L4.4 4.6L6.6 2.2Z" fill="#555"/></svg>
<div class="abs" style="left:1013px;top:127px;width:11px;height:263px;box-sizing:border-box;border:1px solid #979797;border-radius:2px;background:linear-gradient(90deg,#f5f5f5 0,#eaeaea 45%,#d6d6d6 55%,#cbcbcb 100%)"></div>
<div class="abs" style="left:1016.2px;top:255.8px;width:4.4px;height:0.9px;background:#666;box-shadow:0 2.3px 0 #666,0 4.6px 0 #666"></div>
<!-- horizontal scrollbar -->
<div class="abs" style="left:875.4px;top:519.5px;width:149.6px;height:12px;background:#f0f0f0"></div>
<div class="abs" style="left:875.4px;top:519.5px;width:137.8px;height:12px;background:linear-gradient(#e3e3e3,#efefef 30%,#f1f1f1)"></div>
<svg class="abs" style="left:878px;top:521.4px" width="7" height="8" viewBox="0 0 7 8"><path d="M4.6 1.8L2.2 4L4.6 6.2Z" fill="#444"/></svg>
<svg class="abs" style="left:1003px;top:521.4px" width="7" height="8" viewBox="0 0 7 8"><path d="M2.4 1.8L4.8 4L2.4 6.2Z" fill="#444"/></svg>
<div class="abs" style="left:888px;top:520.2px;width:94px;height:10.8px;box-sizing:border-box;border:1px solid #8f8f8f;border-radius:2px;background:linear-gradient(#f4f4f4 0,#e9e9e9 45%,#d4d4d4 55%,#c9c9c9 100%)"></div>
<div class="abs" style="left:932.8px;top:523.6px;width:0.8px;height:3.8px;background:#777;box-shadow:1.7px 0 0 #777,3.4px 0 0 #777"></div>
<div class="abs" style="left:0;top:531px;width:1025px;height:15px;background:#f0eded"></div><div class="abs" style="left:0;top:531px;width:871px;height:1px;background:#9ea4ba"></div><div class="abs" style="left:871px;top:531px;width:154px;height:1px;background:#d4d4da"></div><div class="abs" style="left:0;top:532px;width:1025px;height:1px;background:#f9f8f8"></div>
<div class="t" id="run" style="left:3.1px;top:535.4px;font-size:8.3px;color:#111;-webkit-text-stroke:0.2px #111;letter-spacing:0.217px">Running...</div>
<div class="t" id="date" style="left:947px;top:535.4px;font-size:8.3px;color:#111;-webkit-text-stroke:0.2px #111;white-space:pre;letter-spacing:-0.119px">14-03-2016  21:44</div>

</body></html>
